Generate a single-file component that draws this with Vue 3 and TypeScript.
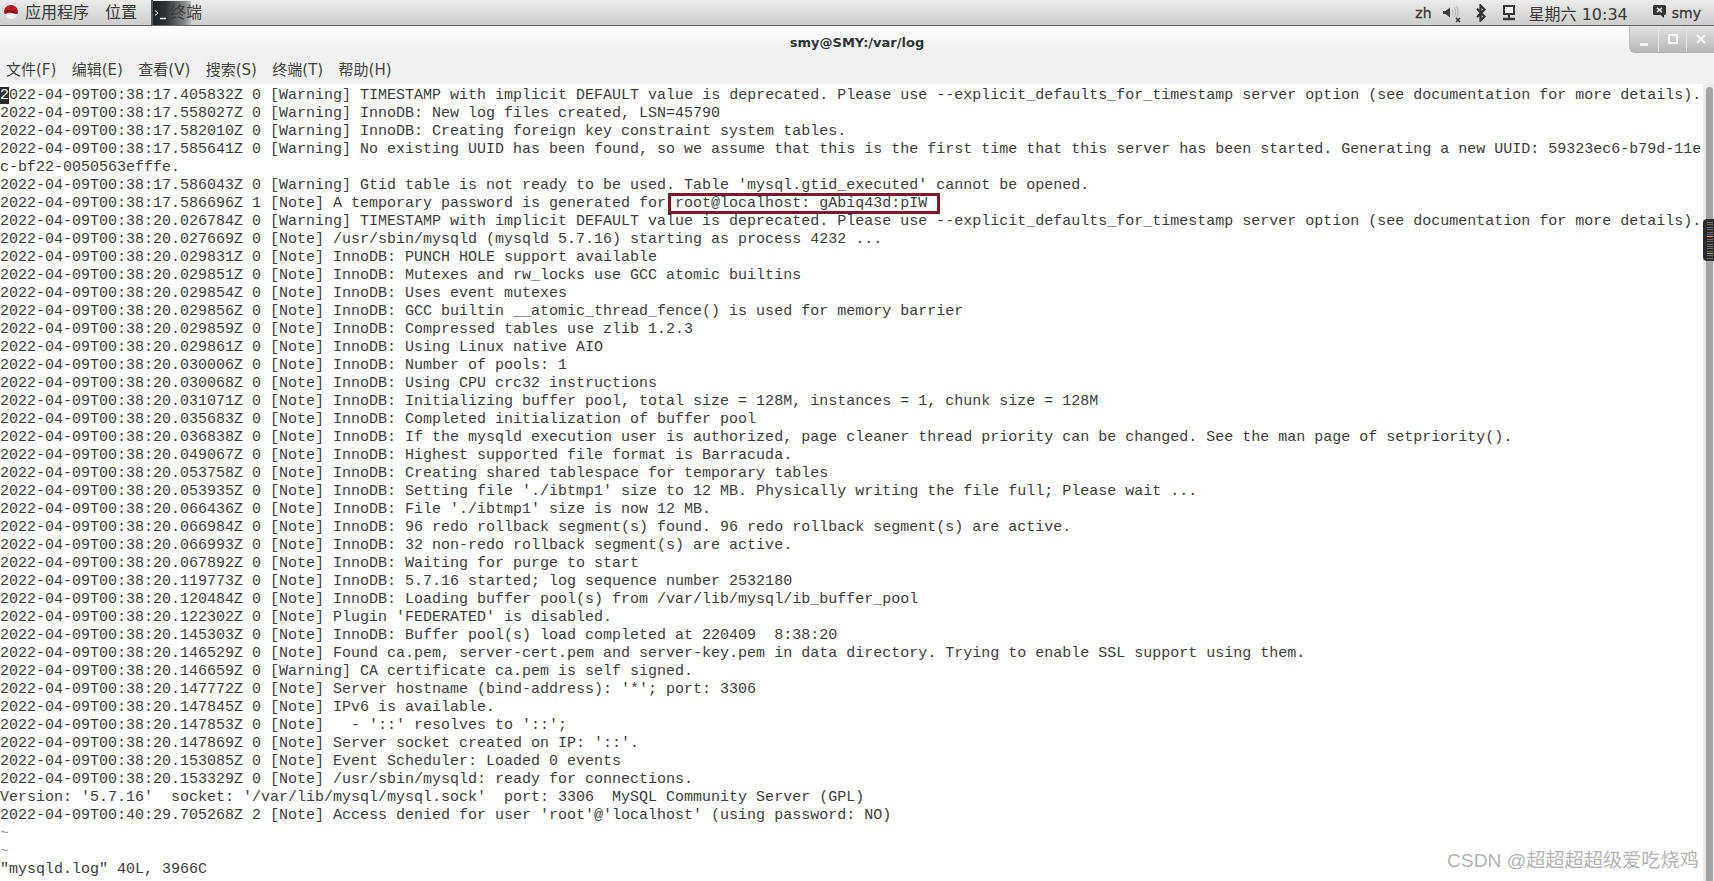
<script setup lang="ts">
const first = "022-04-09T00:38:17.405832Z 0 [Warning] TIMESTAMP with implicit DEFAULT value is deprecated. Please use --explicit_defaults_for_timestamp server option (see documentation for more details).";
const lines: string[] = [
  "2022-04-09T00:38:17.558027Z 0 [Warning] InnoDB: New log files created, LSN=45790",
  "2022-04-09T00:38:17.582010Z 0 [Warning] InnoDB: Creating foreign key constraint system tables.",
  "2022-04-09T00:38:17.585641Z 0 [Warning] No existing UUID has been found, so we assume that this is the first time that this server has been started. Generating a new UUID: 59323ec6-b79d-11e",
  "c-bf22-0050563efffe.",
  "2022-04-09T00:38:17.586043Z 0 [Warning] Gtid table is not ready to be used. Table 'mysql.gtid_executed' cannot be opened.",
  "2022-04-09T00:38:17.586696Z 1 [Note] A temporary password is generated for root@localhost: gAbiq43d:pIW",
  "2022-04-09T00:38:20.026784Z 0 [Warning] TIMESTAMP with implicit DEFAULT value is deprecated. Please use --explicit_defaults_for_timestamp server option (see documentation for more details).",
  "2022-04-09T00:38:20.027669Z 0 [Note] /usr/sbin/mysqld (mysqld 5.7.16) starting as process 4232 ...",
  "2022-04-09T00:38:20.029831Z 0 [Note] InnoDB: PUNCH HOLE support available",
  "2022-04-09T00:38:20.029851Z 0 [Note] InnoDB: Mutexes and rw_locks use GCC atomic builtins",
  "2022-04-09T00:38:20.029854Z 0 [Note] InnoDB: Uses event mutexes",
  "2022-04-09T00:38:20.029856Z 0 [Note] InnoDB: GCC builtin __atomic_thread_fence() is used for memory barrier",
  "2022-04-09T00:38:20.029859Z 0 [Note] InnoDB: Compressed tables use zlib 1.2.3",
  "2022-04-09T00:38:20.029861Z 0 [Note] InnoDB: Using Linux native AIO",
  "2022-04-09T00:38:20.030006Z 0 [Note] InnoDB: Number of pools: 1",
  "2022-04-09T00:38:20.030068Z 0 [Note] InnoDB: Using CPU crc32 instructions",
  "2022-04-09T00:38:20.031071Z 0 [Note] InnoDB: Initializing buffer pool, total size = 128M, instances = 1, chunk size = 128M",
  "2022-04-09T00:38:20.035683Z 0 [Note] InnoDB: Completed initialization of buffer pool",
  "2022-04-09T00:38:20.036838Z 0 [Note] InnoDB: If the mysqld execution user is authorized, page cleaner thread priority can be changed. See the man page of setpriority().",
  "2022-04-09T00:38:20.049067Z 0 [Note] InnoDB: Highest supported file format is Barracuda.",
  "2022-04-09T00:38:20.053758Z 0 [Note] InnoDB: Creating shared tablespace for temporary tables",
  "2022-04-09T00:38:20.053935Z 0 [Note] InnoDB: Setting file './ibtmp1' size to 12 MB. Physically writing the file full; Please wait ...",
  "2022-04-09T00:38:20.066436Z 0 [Note] InnoDB: File './ibtmp1' size is now 12 MB.",
  "2022-04-09T00:38:20.066984Z 0 [Note] InnoDB: 96 redo rollback segment(s) found. 96 redo rollback segment(s) are active.",
  "2022-04-09T00:38:20.066993Z 0 [Note] InnoDB: 32 non-redo rollback segment(s) are active.",
  "2022-04-09T00:38:20.067892Z 0 [Note] InnoDB: Waiting for purge to start",
  "2022-04-09T00:38:20.119773Z 0 [Note] InnoDB: 5.7.16 started; log sequence number 2532180",
  "2022-04-09T00:38:20.120484Z 0 [Note] InnoDB: Loading buffer pool(s) from /var/lib/mysql/ib_buffer_pool",
  "2022-04-09T00:38:20.122302Z 0 [Note] Plugin 'FEDERATED' is disabled.",
  "2022-04-09T00:38:20.145303Z 0 [Note] InnoDB: Buffer pool(s) load completed at 220409  8:38:20",
  "2022-04-09T00:38:20.146529Z 0 [Note] Found ca.pem, server-cert.pem and server-key.pem in data directory. Trying to enable SSL support using them.",
  "2022-04-09T00:38:20.146659Z 0 [Warning] CA certificate ca.pem is self signed.",
  "2022-04-09T00:38:20.147772Z 0 [Note] Server hostname (bind-address): '*'; port: 3306",
  "2022-04-09T00:38:20.147845Z 0 [Note] IPv6 is available.",
  "2022-04-09T00:38:20.147853Z 0 [Note]   - '::' resolves to '::';",
  "2022-04-09T00:38:20.147869Z 0 [Note] Server socket created on IP: '::'.",
  "2022-04-09T00:38:20.153085Z 0 [Note] Event Scheduler: Loaded 0 events",
  "2022-04-09T00:38:20.153329Z 0 [Note] /usr/sbin/mysqld: ready for connections.",
  "Version: '5.7.16'  socket: '/var/lib/mysql/mysql.sock'  port: 3306  MySQL Community Server (GPL)",
  "2022-04-09T00:40:29.705268Z 2 [Note] Access denied for user 'root'@'localhost' (using password: NO)",
];
const menus: string[] = ["文件(F)", "编辑(E)", "查看(V)", "搜索(S)", "终端(T)", "帮助(H)"];
</script>

<template>
  <div class="screen">
    <header class="panel">
      <div class="panel-left">
        <svg class="hat" width="16" height="16" viewBox="0 0 16 16">
          <ellipse cx="8.500" cy="11.500" rx="5" ry="3.500" fill="#f2f2f2" />
          <path d="M1 8.500C1 4 4 1 8 1s7 3 7 7.500c0 1.500-1.500 2-3 1.500-2-.7-4-1.200-6-1.200-1.500 0-2.500 1.500-3.500 1.200C1.500 9.800 1 9.300 1 8.500z" fill="#b81c22" />
          <path d="M2.500 7.500c3-.8 7 0 11.500 1.800" stroke="#5d0c10" stroke-width="1.200" fill="none" />
        </svg>
        <span class="apps">应用程序</span>
        <span class="places">位置</span>
        <div class="task">
          <div class="task-icon">
            <svg width="14" height="12" viewBox="0 0 14 12">
              <path d="M1 1.500l3 2.500-3 2.500" stroke="#fff" stroke-width="1" fill="none" />
              <path d="M6 9.500h6" stroke="#fff" stroke-width="1.500" fill="none" />
            </svg>
          </div>
          <span class="task-label">终端</span>
        </div>
      </div>
      <div class="panel-right">
        <span class="zh">zh</span>
        <svg class="vol" width="20" height="20" viewBox="0 0 20 20">
          <path d="M1 8h2.500L8 4.500v10L3.500 11H1z" fill="#3b3b3b" />
          <path d="M10 6.500c1 1.500 1 4 0 5.500M12.300 4.500c1.700 2.500 1.700 7 0 9.500M14.500 3c2 3 2 9.500 0 12" stroke="#b5b5b5" stroke-width="1.100" fill="none" />
          <path d="M14 15l4 4M18 15l-4 4" stroke="#333" stroke-width="1.500" />
        </svg>
        <svg class="bt" width="12" height="18" viewBox="0 0 12 18">
          <path d="M2 4.800l7.500 7.700-4 4V1.500l4 4L2 13.200" stroke="#333" stroke-width="2.200" fill="none" />
        </svg>
        <svg class="net" width="14" height="18" viewBox="0 0 14 18">
          <path d="M2 2h10v8H2z" fill="#f0f0f0" stroke="#383838" stroke-width="2" />
          <path d="M7 10v4" stroke="#383838" stroke-width="2" />
          <path d="M1 15h12" stroke="#383838" stroke-width="2.500" />
        </svg>
        <span class="clock">星期六 10:34</span>
        <svg class="chat" width="15" height="15" viewBox="0 0 15 15">
          <path d="M2.500 1h10A1.500 1.500 0 0 1 14 2.500v7a1.500 1.500 0 0 1-1.500 1.500H12v3l-3.500-3h-6A1.500 1.500 0 0 1 1 9.500v-7A1.500 1.500 0 0 1 2.500 1z" fill="#333" />
          <path d="M5 3.800l5 4.400M10 3.800L5 8.200" stroke="#e0e0e0" stroke-width="1.600" />
        </svg>
        <span class="user">smy</span>
      </div>
    </header>

    <div class="titlebar">
      <span class="title">smy@SMY:/var/log</span>
      <div class="winbtns">
        <div class="winbtn"><span class="min"></span></div>
        <div class="winbtn"><span class="max"></span></div>
        <div class="winbtn">
          <svg width="10" height="10" viewBox="0 0 10 10"><path d="M1 1l8 8M9 1l-8 8" stroke="#f5f5f5" stroke-width="2.200" /></svg>
        </div>
      </div>
    </div>

    <nav class="menubar">
      <span v-for="m in menus" :key="m" class="menu">{{ m }}</span>
    </nav>

    <main class="term">
      <div class="output">
        <div class="row"><span class="cursor">2</span>{{ first }}</div>
        <div v-for="(l, i) in lines" :key="i" class="row">{{ l }}</div>
        <div class="row tilde">~</div>
        <div class="row tilde">~</div>
        <div class="row">"mysqld.log" 40L, 3966C</div>
        <div class="mark"></div>
      </div>
      <div class="scrollbar">
        <div class="thumb"></div>
        <div class="minimap">
          <i v-for="n in 16" :key="n" :class="{ amber: n === 7, green: n === 14 }"></i>
        </div>
      </div>
      <div class="watermark">CSDN @超超超超级爱吃烧鸡</div>
    </main>
  </div>
</template>

<style>
html, body { margin: 0; padding: 0; background: #fff; overflow: hidden; }
</style>

<style scoped>
.screen {
  width: 1714px;
  height: 881px;
  display: flex;
  flex-direction: column;
  overflow: hidden;
  font-family: "Noto Sans CJK SC", sans-serif;
}
.panel {
  height: 25px;
  flex: none;
  display: flex;
  justify-content: space-between;
  align-items: center;
  background: linear-gradient(#ececec, #cdcdcd);
  border-bottom: 1px solid #6a6a6a;
  color: #3a3a3a;
}
.panel-left { display: flex; align-items: center; height: 100%; padding-left: 3px; }
.hat { flex: none; margin-bottom: 1px; }
.apps { margin-left: 6px; font-size: 16px; line-height: 23px; margin-bottom: 2px; }
.places { margin-left: 16px; font-size: 16px; line-height: 23px; margin-bottom: 2px; }
.task {
  margin-left: 14px;
  height: 25px;
  display: flex;
  align-items: center;
  position: relative;
  border-left: 2px solid #555;
  width: 50px;
}
.task-icon {
  width: 38px;
  height: 24px;
  background: linear-gradient(90deg, #1d2222 0%, #2f3333 35%, #8a8c8c 85%, #bdbdbd 100%);
  padding: 1px 0 0 1px;
  box-sizing: border-box;
  flex: none;
}
.task-label {
  position: absolute;
  left: 17px;
  top: -1px;
  font-size: 16px;
  line-height: 25px;
  color: #3a3a3a;
}
.panel-right { display: flex; align-items: center; height: 100%; padding-right: 13px; }
.zh { font: 14px "DejaVu Sans", sans-serif; -webkit-text-stroke: 0.3px #3a3a3a; margin-right: 10px; }
.vol { margin-right: 13px; }
.bt { margin-right: 15px; }
.net { margin-right: 13px; }
.clock { font-family: "DejaVu Sans", "Noto Sans CJK SC", sans-serif; font-size: 16px; margin-right: 24px; }
.chat { margin-right: 5px; margin-bottom: 2px; }
.user { font: 14px "DejaVu Sans", sans-serif; -webkit-text-stroke: 0.3px #3a3a3a; }
.titlebar {
  height: 27px;
  flex: none;
  position: relative;
  display: flex;
  align-items: center;
  justify-content: center;
  background: linear-gradient(#ffffff, #efefef);
}
.title {
  font: bold 13px "DejaVu Sans", sans-serif;
  color: #2e3436;
  margin-top: 6px;
}
.winbtns {
  position: absolute;
  right: 0;
  top: 0;
  height: 27px;
  display: flex;
  border-bottom-left-radius: 6px;
  overflow: hidden;
  border-left: 1px solid #bdbdbd;
  border-bottom: 1px solid #b0b0b0;
  box-sizing: border-box;
  background: linear-gradient(#e2e2e2, #b8b8b8);
}
.winbtn {
  width: 28px;
  display: flex;
  align-items: center;
  justify-content: center;
  border-left: 1px solid #e4e4e4;
  box-sizing: border-box;
}
.winbtn:first-child { border-left: 0; }
.min { width: 8px; height: 3px; background: #f5f5f5; margin-top: 10px; }
.max { width: 6px; height: 6px; border: 2px solid #f5f5f5; }
.menubar {
  height: 31px;
  flex: none;
  display: flex;
  align-items: center;
  gap: 15.400px;
  padding: 0 0 0 6px;
  background: #f1f1f1;
}
.menu { font-family: "DejaVu Sans", "Noto Sans CJK SC", sans-serif; font-size: 15px; color: #444; line-height: 31px; margin-top: 4px; }
.term {
  flex: 1;
  display: flex;
  position: relative;
  background: #fff;
  min-height: 0;
}
.output {
  flex: 1;
  position: relative;
  padding-top: 3px;
  font-family: "Liberation Mono", monospace;
  font-size: 15px;
  line-height: 18px;
  color: #3c3c3c;
}
.row { height: 18px; white-space: pre; }
.cursor { background: #2b2b2b; color: #fff; }
.tilde { color: #999; }
.mark {
  position: absolute;
  left: 668px;
  top: 109px;
  width: 272px;
  height: 21px;
  border: 3px solid #7a1a2c;
  box-sizing: border-box;
}
.scrollbar {
  width: 11px;
  flex: none;
  background: #ececec;
  position: relative;
  padding: 3px 1px 0 3px;
  box-sizing: border-box;
}
.thumb { height: 100%; background: #a3a3a3; border-radius: 4px 4px 0 0; }
.minimap {
  position: absolute;
  left: 0;
  top: 135px;
  width: 11px;
  height: 42px;
  background: #2b2b2b;
  border-radius: 4px 0 0 4px;
  display: flex;
  flex-direction: column;
  gap: 1.400px;
  padding: 3px 0 0 4px;
  box-sizing: border-box;
}
.minimap i { display: block; height: 1px; width: 6px; background: #6b6b6b; }
.minimap i.amber { background: #d9a25c; }
.minimap i.green { background: #8cc05a; }
.watermark {
  position: absolute;
  left: 1447px;
  top: 763px;
  font-family: "Liberation Sans", "Noto Sans CJK SC", sans-serif;
  font-size: 19.200px;
  line-height: 28px;
  color: #b4b4b4;
  white-space: nowrap;
}
</style>
